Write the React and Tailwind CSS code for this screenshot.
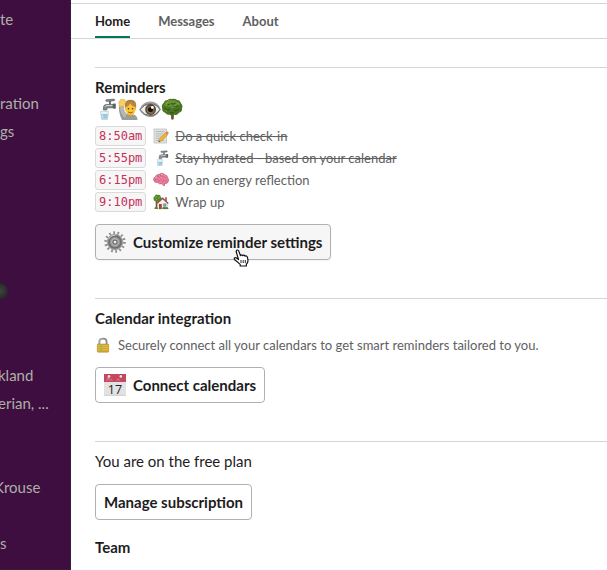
import React from 'react';

const FaucetIcon = ({ className = '' }) => (
  <svg viewBox="0 0 22 22" className={className} aria-hidden="true">
    <path d="M8.5 12V9.5Q8.5 6.4 11.6 6.4H18V9.8H12.9Q11.8 9.8 11.8 11V12Z" fill="#85898b" stroke="#55595b" strokeWidth=".7" />
    <path d="M10 8.7Q10.5 7.6 12 7.6H17.5" stroke="#d5dadb" strokeWidth="1" fill="none" />
    <rect x="14" y="3" width="2" height="3.6" fill="#6b6f72" />
    <path d="M11 1.8 19 1.1Q20.2 1.4 19.4 2.7L11.8 3.5Q10.2 3.2 11 1.8Z" fill="#8d9193" stroke="#4c5052" strokeWidth=".6" />
    <rect x="18" y="5.4" width="2.8" height="5.4" rx=".7" fill="#5d6163" />
    <path d="M9.3 12H11V15H9.3Z" fill="#add9ec" />
    <path d="M5.6 13.2H13.5L12.6 21.5H6.5Z" fill="#eaf3f6" stroke="#b3c0c6" strokeWidth=".6" />
    <path d="M6.2 16H12.8L12.2 20.8H6.8Z" fill="#94cae4" />
    <path d="M7.5 16.9 7.9 20" stroke="#cdeaf6" strokeWidth="1" />
  </svg>
);

const RaisedHandIcon = ({ className = '' }) => (
  <svg viewBox="0 0 22 22" className={className} aria-hidden="true">
    <path d="M2 9Q2 17 5 22H20.5Q20.5 17.6 16.5 16.5L9 16Z" fill="#9a9d9f" />
    <path d="M2.2 8.5 6.2 8Q6.4 14 10 17L8 20.5Q3 17 2.2 8.5Z" fill="#b4b6b7" stroke="#85888a" strokeWidth=".5" />
    <path d="M7.8 9.5Q7 1.7 13.5 1.7Q20 1.7 19.2 9.5L18 12.5H9Z" fill="#ad7838" />
    <path d="M11.3 14.5H16V17.5Q13.6 19.2 11.3 17.5Z" fill="#dc9e20" />
    <ellipse cx="13.5" cy="10.8" rx="5.2" ry="6.2" fill="#f8c536" />
    <path d="M8.5 9.5Q11.7 8.4 13.2 5.5Q15 8.6 18.7 9.2L18.5 5.1 14 3 9 5Z" fill="#b98544" />
    <path d="M2.5 8.8 1.8 4Q2 2.9 2.9 3.6L3.2 1.8Q4 .8 4.5 1.9L5.3 1Q6.2 .6 6.6 1.9Q8 1.3 8.6 2.8L8 5.5 6.3 8.5Z" fill="#f9d05b" stroke="#d9a038" strokeWidth=".5" />
    <circle cx="11.5" cy="10.8" r=".8" fill="#503719" />
    <circle cx="15.6" cy="10.8" r=".8" fill="#503719" />
    <path d="M11.2 14Q13.5 15.8 15.8 14" stroke="#9b4b22" strokeWidth=".9" fill="none" />
  </svg>
);

const EyeIcon = ({ className = '' }) => (
  <svg viewBox="0 0 22 22" className={className} aria-hidden="true">
    <path d="M.2 11.7Q4.3 3.5 11.5 3.5T21.8 11.4Q17.5 19 11.2 19T.2 11.7Z" fill="#8f8f8f" />
    <path d="M1.1 11.7Q5 6 11.4 6T20.9 11.5Q17 17.6 11.2 17.6T1.1 11.7Z" fill="#eeeeec" stroke="#666" strokeWidth="1" />
    <path d="M2.2 8Q6 4.5 11.4 4.5T20 8" stroke="#b1b1b1" strokeWidth=".8" fill="none" />
    <circle cx="11.6" cy="11.5" r="5.4" fill="#4a4036" />
    <circle cx="11.6" cy="11.8" r="4.1" fill="#8a6a44" />
    <circle cx="11.6" cy="11.6" r="2.5" fill="#111" />
    <circle cx="13.3" cy="9.5" r="1.4" fill="#fff" />
  </svg>
);

const TreeIcon = ({ className = '' }) => (
  <svg viewBox="0 0 22 22" className={className} aria-hidden="true">
    <path d="M9.8 12 10.2 21Q11.4 22.3 12.7 21L13.1 12Z" fill="#71502f" />
    <path d="M11 1Q14 0 16 2Q19 2 19.8 4.9Q22.4 7.6 21 10.5Q21.4 14 18 14.7Q16.3 18 13 16.7Q11 18.5 8.8 16.7Q5.6 17.4 4.2 14.8Q.8 13.6 1.2 10.3Q0 7 2.7 4.8Q3.6 1.8 6.8 2.1Q8.7 0 11 1Z" fill="#4a7322" />
    <path d="M6 3.5Q8-.1 11 2.5Q14 1 15.5 3.6Q18.8 4.1 18.7 7L16 9 12.5 7.4 9 9.1 3.3 8Q3 4.5 6 3.5Z" fill="#689335" />
    <path d="M4 10.5Q6 13 8.8 11.3M10 5.6Q12.5 7 14.5 4.9M13 12.3Q16 13.6 18.2 10.5M6.5 7.3 8.8 6M9 14.5Q11 15.8 12.8 14.1M15 8.9 17.2 7.2" stroke="#2f5518" strokeWidth="1.1" fill="none" />
    <path d="M5.3 5.4 7 4.2M10.5 9.8 12.6 9M4.6 12.6 6 13.5M16.1 4.9 17.4 6" stroke="#8db04a" strokeWidth="1" fill="none" />
  </svg>
);

const MemoIcon = ({ className = '' }) => (
  <svg viewBox="0 0 16 16" className={className} aria-hidden="true">
    <path d="M1 1H13.5V15H1Z" fill="#e2e3e1" stroke="#b5b8b8" strokeWidth=".7" />
    <path d="M2.7 3.6H11.5M2.7 5.8H10M2.7 8H8.5M2.7 10.2H6.5M2.7 12.4H11.5" stroke="#a8acae" strokeWidth=".8" />
    <path d="M12.2 4.8 14.6 6.8 8.5 13 5.7 14 6.4 11Z" fill="#efb72d" stroke="#a97713" strokeWidth=".5" />
    <path d="M12.2 4.8 13.5 3.6Q15 3 15.8 4.8L14.6 6.8Z" fill="#dd7b79" />
    <path d="M5.7 14 6 12.7 7 13.5Z" fill="#333" />
  </svg>
);

const BrainIcon = ({ className = '' }) => (
  <svg viewBox="0 0 16 16" className={className} aria-hidden="true">
    <path d="M.5 8Q.4 5.8 2.2 4.7Q3.3 2.3 6 2.4Q9-.1 11.5 2.5Q14.4 3 14.7 5.7Q16.4 8 15 10.2Q14 12 11.8 11.4L11.2 14 8.8 11.7Q6 12.6 4.9 10.6Q1.4 11.2.5 8Z" fill="#e77e9b" stroke="#bc4669" strokeWidth=".6" />
    <path d="M2 7.7Q3.5 8.4 4.7 6.8M4 4.4Q6.4 4 6.4 6.1M7.2 3.5Q9.4 3.1 9.5 5.2M11 4.5Q12.7 4.4 12.7 6.1M5 9Q7.2 9.6 8 7.3M9 9.9Q11.4 9.6 10.9 7.3M12 9.6 14 8" stroke="#c9547a" strokeWidth=".7" fill="none" />
    <path d="M2.7 5.3 4 5M8 2.7 9.8 2.4M12 3.7 13 4.3" stroke="#ffb1c3" strokeWidth=".8" />
  </svg>
);

const HouseIcon = ({ className = '' }) => (
  <svg viewBox="0 0 16 16" className={className} aria-hidden="true">
    <path d="M2.7 6H4.4V15H2.7Z" fill="#76552c" />
    <path d="M.5 5Q0 2.5 2 2Q2.5 0 5 .9Q7.6.5 7.8 3Q9.7 5 7.5 7Q5.8 9 4 7.5Q.8 8 .5 5Z" fill="#538728" />
    <path d="M2 3.5 4 2.7M5 4.5 6.8 3M2.5 6 4 5.3" stroke="#8bb548" strokeWidth=".8" />
    <path d="M4.8 8 9.7 4.5 14.7 8.5V15H4.8Z" fill="#f1f0ec" stroke="#aaa" strokeWidth=".4" />
    <path d="M12.2 3.3H13.8V7.5L12.2 6Z" fill="#935548" />
    <path d="M3.6 8.7 9.7 3.2 15.7 8.9 14.8 9.9 9.7 5.3 4.5 9.7Z" fill="#935447" />
    <path d="M6 10H8.8V15H6Z" fill="#a44238" />
    <path d="M10.4 9.8H13.1V12.4H10.4Z" fill="#65a7d2" stroke="#7b878b" strokeWidth=".5" />
    <path d="M9.4 15V13.4Q11 12.5 12 13.3Q15 12.3 15.6 15ZM1.3 15Q1.7 12.3 4 12.8L5 15Z" fill="#508029" />
  </svg>
);

const GearIcon = ({ className = '' }) => (
  <svg viewBox="0 0 22 22" className={className} aria-hidden="true">
    <circle cx="11" cy="11" r="9.3" fill="none" stroke="#8c8c8c" strokeWidth="2.8" strokeDasharray="1.7 2.48" />
    <circle cx="11" cy="11" r="7.8" fill="#9b9b9b" stroke="#858585" strokeWidth=".5" />
    <circle cx="11" cy="11" r="6" fill="none" stroke="#6a6a6a" strokeWidth="1.5" />
    <path d="M4.6 8Q7 4 11.5 4" fill="none" stroke="#d0d0d0" strokeWidth="1" />
    <circle cx="11" cy="11" r="4.2" fill="#bdbdbd" stroke="#808080" strokeWidth=".6" />
    <circle cx="11" cy="11" r="2.6" fill="#5c5c5c" />
    <circle cx="11" cy="11" r="1.5" fill="#eee" />
  </svg>
);

const LockIcon = ({ className = '' }) => (
  <svg viewBox="0 0 16 16" className={className} aria-hidden="true">
    <path d="M4.4 8V4.8Q4.4 1.6 8 1.6T11.6 4.8V8" fill="none" stroke="#888c8f" strokeWidth="1.8" />
    <path d="M4.1 7V4.8Q4.1 1.2 8 1.2" fill="none" stroke="#c2c5c7" strokeWidth=".6" />
    <rect x="2.3" y="7" width="11.4" height="8.2" rx=".8" fill="#d3a832" stroke="#a88124" strokeWidth=".5" />
    <path d="M3 8.5H13M3 10.6H13M3 12.7H13" stroke="#e3bf52" strokeWidth=".8" />
    <path d="M5 7.3H7.2V14.9H5Z" fill="#b1b440" />
  </svg>
);

const CalendarIcon = ({ className = '' }) => (
  <svg viewBox="0 0 22 22" className={className} aria-hidden="true">
    <rect width="22" height="22" fill="#d6d6d7" />
    <path d="M0 8H22V20.5H0Z" fill="#e2e2e3" />
    <rect width="22" height="8" fill="#c44861" />
    <path d="M2.5 6.8 4 3.8 6 6.8M6.4 4.5 8.3 6.7M12.5 6.8 14 4.8 16 6.8" stroke="#e3929f" strokeWidth=".8" fill="none" />
    <path d="M5 .3V2M16.8.3V2" stroke="#772938" strokeWidth="1" />
    <circle cx="5" cy="2.4" r="1.3" fill="#f4e2e4" />
    <circle cx="16.8" cy="2.4" r="1.3" fill="#f4e2e4" />
    <text x="11" y="19.6" textAnchor="middle" fontSize="12.5" fontWeight="400" fontFamily="Open Sans, sans-serif" fill="#222">17</text>
  </svg>
);

const HandCursor = ({ className = '' }) => (
  <svg viewBox="0 0 16 18" className={className} aria-hidden="true">
    <path
      d="M5.5 10.5 3.3 3Q3 1.1 4.4 1Q5.5.9 6 2.5L7.4 6.6Q8.4 5.1 9.6 6.7Q11 5.5 12 7.1Q13.7 6.2 14.5 8.5L15 11.5Q15 14 13.4 15V17H7.2V15.4L1.8 10.8Q.7 9.5 1.8 8.8Q3 8.3 5.5 10.5Z"
      fill="#fff" stroke="#15101c" strokeWidth="1.2" strokeLinejoin="round"
    />
    <path d="M8 11V14M10.2 11V14M12.3 11V14" stroke="#15101c" strokeWidth=".9" />
  </svg>
);

const SidebarLink = ({ children }) => (
  <a href="#" className="flex h-7 items-center whitespace-nowrap">{children}</a>
);

const Sidebar = () => (
  <aside className="w-[71px] shrink-0 overflow-hidden border-r border-b border-[#35203a] bg-[#3f0e40] pt-[5px] text-[15px] text-[#acb0a8]">
    <div className="space-y-14">
      <div><SidebarLink>te</SidebarLink></div>
      <div>
        <SidebarLink>ration</SidebarLink>
        <SidebarLink>gs</SidebarLink>
      </div>
    </div>
    <div className="mt-33 -ml-0.5 space-y-14">
      <div className="flex h-7 items-center">
        <span className="-ml-1.5 size-4 rounded-full bg-radial from-[#444] to-[#1d1d1d]" />
      </div>
      <div>
        <SidebarLink>kland</SidebarLink>
        <SidebarLink>erian, ...</SidebarLink>
      </div>
    </div>
    <div className="mt-14 -ml-1.5"><SidebarLink>Krouse</SidebarLink></div>
    <div className="mt-7"><SidebarLink>s</SidebarLink></div>
  </aside>
);

const Tab = ({ active, children }) => (
  <button
    type="button"
    role="tab"
    aria-selected={!!active}
    className={`border-b-2 pt-0.5 text-[13px] font-bold ${active ? 'border-[#007a5a] text-[#1d1c1d]' : 'border-transparent text-[#616061]'}`}
  >
    {children}
  </button>
);

const Button = ({ icon, hovered, children }) => (
  <button
    type="button"
    className={`relative flex h-9 w-fit items-center gap-[7px] rounded border border-[#b0b0b0] px-2 text-[15px] font-bold whitespace-nowrap ${hovered ? 'bg-[#f6f6f6] shadow-xs' : 'bg-white'}`}
  >
    {icon}
    {children}
    {hovered && <HandCursor className="absolute top-6 left-[137px] h-[18px] w-4" />}
  </button>
);

const Section = ({ children }) => (
  <section className="border-t border-[#d5d5d5] pt-2 pb-[38px]">{children}</section>
);

const reminders = [
  { time: '8:50am', Icon: MemoIcon, text: 'Do a quick check-in', done: true },
  { time: '5:55pm', Icon: FaucetIcon, text: 'Stay hydrated - based on your calendar', done: true },
  { time: '6:15pm', Icon: BrainIcon, text: 'Do an energy reflection' },
  { time: '9:10pm', Icon: HouseIcon, text: 'Wrap up' },
];

const Reminder = ({ time, Icon, text, done }) => (
  <li className="flex h-[22px] items-center">
    <code className="rounded-[3px] border border-[#dadada] bg-[#f6f6f6] px-[3px] font-['DejaVu_Sans_Mono',monospace] text-xs leading-[18px] text-[#c7305a]">{time}</code>
    <Icon className="ml-[7px] size-4 shrink-0" />
    <span className={`ml-1.5 ${done ? 'line-through' : ''}`}>{text}</span>
  </li>
);

export default function App() {
  return (
    <div className="flex min-h-screen bg-white font-['Lato','Liberation_Sans',sans-serif] text-[15px] leading-[22px] text-[#1d1c1d]">
      <Sidebar />
      <main className="min-w-0 flex-1 pt-[3px]">
        <nav role="tablist" className="flex h-9 gap-7 border-y border-[#d5d5d5] pl-6">
          <Tab active>Home</Tab>
          <Tab>Messages</Tab>
          <Tab>About</Tab>
        </nav>
        <div className="pt-7 pl-6">
          <Section>
            <h2 className="font-bold">Reminders</h2>
            <div className="flex">
              <FaucetIcon className="size-[22px]" />
              <RaisedHandIcon className="size-[22px]" />
              <EyeIcon className="size-[22px]" />
              <TreeIcon className="size-[22px]" />
            </div>
            <ul className="mt-[5px] mb-[11px] text-[13px] text-[#616061]">
              {reminders.map((r) => <Reminder key={r.time} {...r} />)}
            </ul>
            <Button hovered icon={<GearIcon className="size-[22px]" />}>Customize reminder settings</Button>
          </Section>
          <Section>
            <h2 className="font-bold">Calendar integration</h2>
            <p className="mt-[5px] mb-[11px] flex items-center gap-[7px] text-[13px] text-[#616061]">
              <LockIcon className="size-4 shrink-0" />
              Securely connect all your calendars to get smart reminders tailored to you.
            </p>
            <Button icon={<CalendarIcon className="size-[22px]" />}>Connect calendars</Button>
          </Section>
          <section className="border-t border-[#d5d5d5] pt-2">
            <p className="mb-3">You are on the free plan</p>
            <Button>Manage subscription</Button>
            <h2 className="mt-4 font-bold">Team</h2>
          </section>
        </div>
      </main>
    </div>
  );
}
